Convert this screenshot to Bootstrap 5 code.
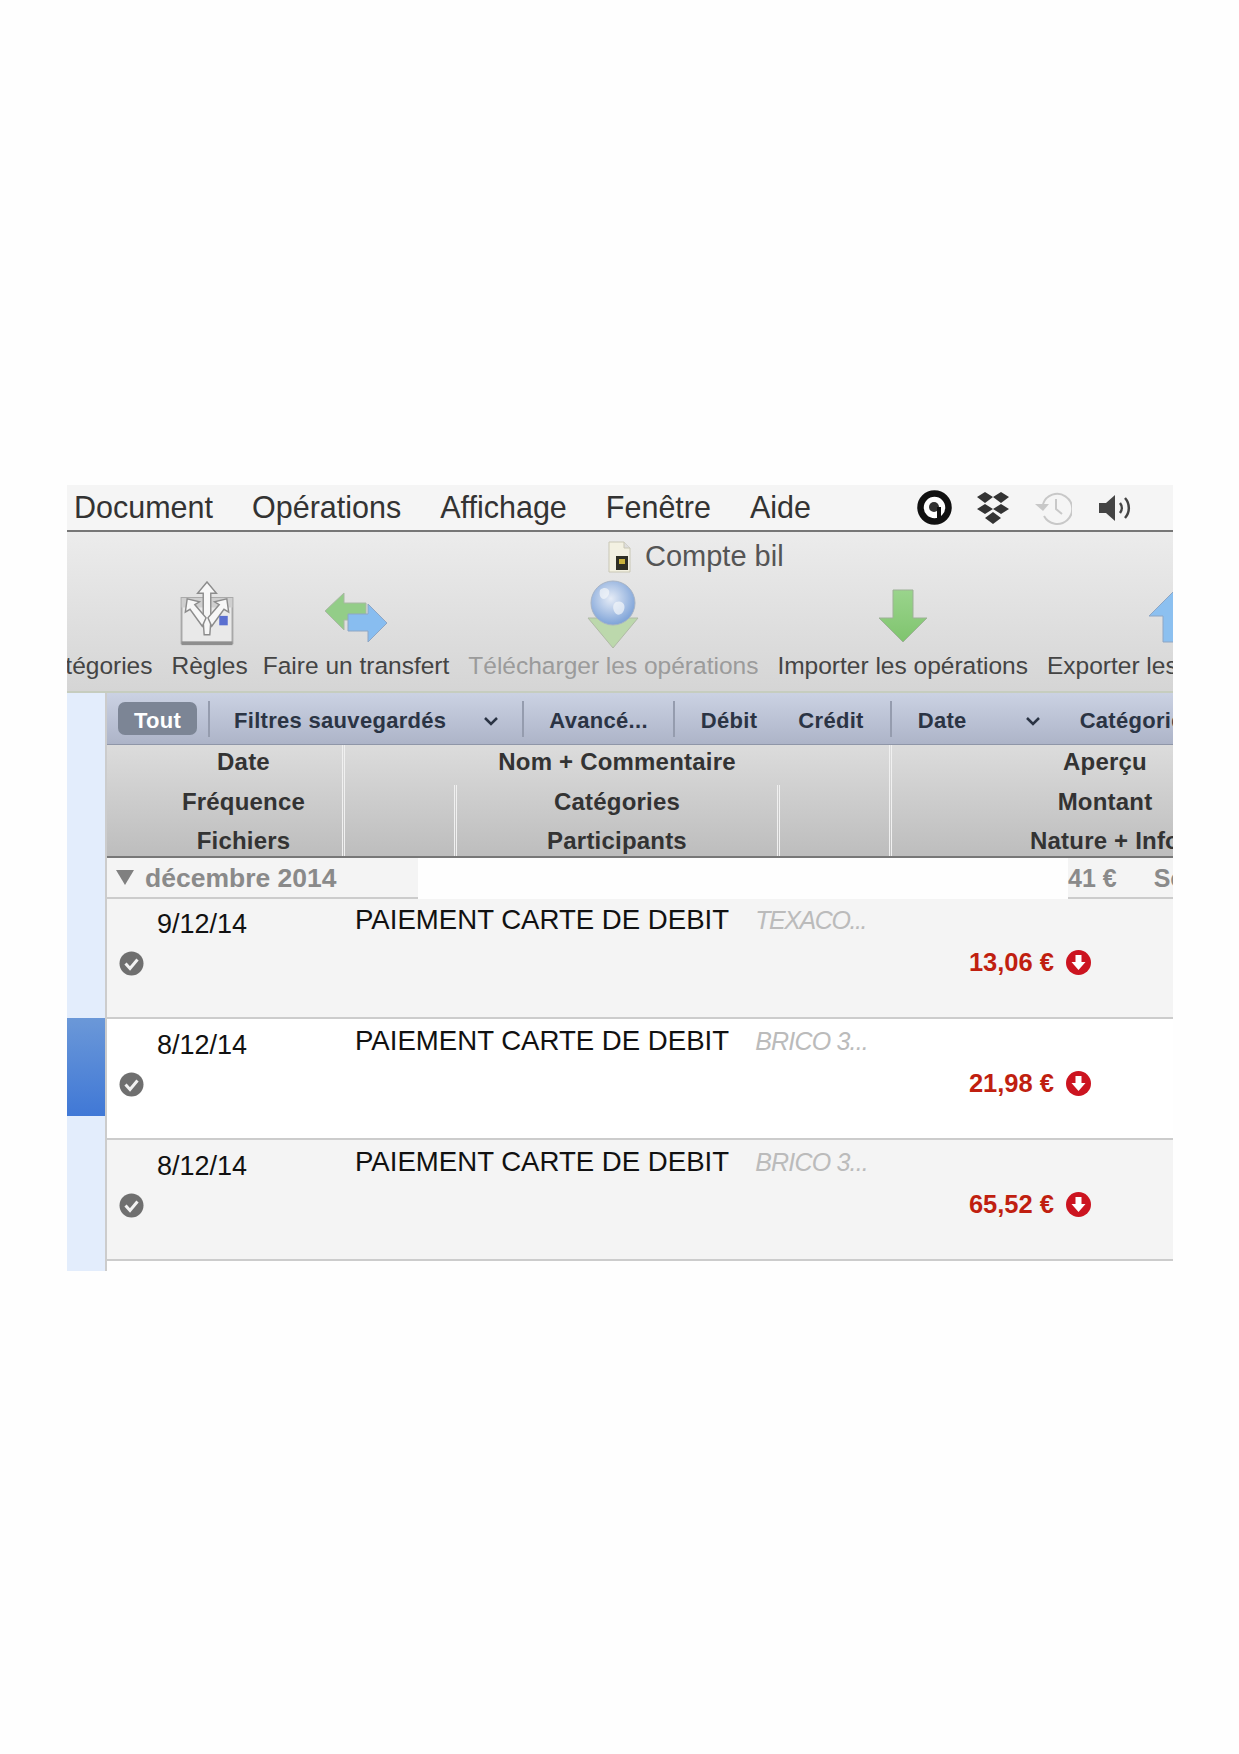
<!DOCTYPE html>
<html lang="fr">
  <head>
    <meta charset="UTF-8" />
    <meta name="viewport" content="width=device-width, initial-scale=1" />
    <title>Compte bil</title>
    <link
      href="https://cdn.jsdelivr.net/npm/bootstrap@5.3.0/dist/css/bootstrap.min.css"
      rel="stylesheet"
    />
    <style>
      body { background: #fefefe; font-family: "Liberation Sans", Arial, sans-serif; }
      .stage { padding: 485px 67px 0; }
      .app-frame { width: 1106px; height: 786px; overflow: hidden; }

      .menu-strip { height: 47px; background: #f5f5f5; border-bottom: 2px solid #777; font-size: 30.5px; color: #333; padding-left: 7px; }
      .menu-strip span { margin-right: 39px; line-height: 42px; padding-bottom: 2px; white-space: nowrap; }
      .menu-icons { margin-left: 67px; gap: 23px; }
      .menu-icons svg { display: block; }
      .icon-sound { margin-left: 3px; }

      .tool-zone { height: 161px; background: linear-gradient(#ececec, #d5d5d5); border-bottom: 2px solid #c6cdbf; }
      .title-line { height: 46px; padding: 4px 0 0 540px; font-size: 29px; color: #555; gap: 13px; }
      .tool-line { margin-left: -33px; gap: 19px; }
      .tool-item { flex: none; height: 113px; font-size: 24.5px; color: #444; white-space: nowrap; }
      .tool-item.off { color: #9b9b9b; }
      .tool-item.tight { margin-right: -4px; }
      .tool-art { height: 70px; }
      .tool-item svg { display: block; }
      .art-rules { margin: 3px 0 0 -6px; }

      .side-rail { width: 40px; flex: none; height: 579px; background: #e3edfc; border-right: 2px solid #ccc; }
      .side-pick { margin-top: 325px; height: 98px; background: linear-gradient(#6b98d8, #4078d6); }
      .list-zone { flex: 1; min-width: 0; }

      .filter-line { height: 52px; background: linear-gradient(#cbd2e3, #adb4c8); border-bottom: 1px solid #8f96a8; font-size: 22px; font-weight: 700; color: #2b3444; padding-left: 11px; white-space: nowrap; letter-spacing: .3px; }
      .filter-line > span { padding-top: 4px; }
      .tout-pill { flex: none; width: 79px; height: 33px; padding-top: 3px; background: #7c8595; color: #fff; border-radius: 7px; margin-right: 11px; }
      .filter-sep { width: 2px; height: 36px; background: #959cae; flex: none; }
      .filter-chev { flex: none; margin-top: 5px; }
      .f-saved { margin: 0 38px 0 24px; }
      .f-sep-a { margin-left: 24px; }
      .f-adv { margin: 0 25px 0 25px; }
      .f-debit { margin-left: 26px; }
      .f-credit { margin: 0 26px 0 41px; }
      .f-date { margin: 0 59px 0 26px; }
      .f-cat { margin-left: 40px; }

      .head-grid { height: 113px; overflow: hidden; background: linear-gradient(#dcdcdc, #bdbdbd); border-bottom: 2px solid #777; font-size: 24px; font-weight: 700; color: #333; text-align: center; white-space: nowrap; letter-spacing: .2px; }
      .head-col { flex: none; border-right: 3px double #f0f0f0; }
      .head-cell { height: 39.6px; line-height: 33px; }
      .head-sub { flex: none; border-right: 3px double #f0f0f0; }
      .col-date { width: 238px; padding-left: 38px; }
      .col-name { width: 547px; }
      .col-view { width: 426px; }
      .sub-a { width: 112px; }
      .sub-b { width: 323px; }
      .sub-c { flex: 1; }

      .month-line { height: 41px; font-size: 26.5px; font-weight: 700; color: #8a8a8a; white-space: nowrap; }
      .month-line span { padding-top: 3px; }
      .month-left { width: 311px; background: #f4f4f4; border-bottom: 2px solid #ccc; padding-left: 9px; gap: 11px; }
      .month-right { margin-left: 650px; flex: none; width: 200px; background: #f4f4f4; border-bottom: 2px solid #ccc; font-size: 25px; gap: 37px; }

      .op-line { height: 121px; padding-top: 1px; border-bottom: 2px solid #ccc; background: #f4f4f4; display: grid; grid-template-columns: 248px 1fr; grid-template-rows: 50px 1fr; }
      .op-line.op-first { height: 120px; padding-top: 0; }
      .op-line.plain { background: #fff; }
      .op-date { font-size: 27px; color: #111; padding: 5px 0 0 50px; }
      .op-name { font-size: 27.6px; color: #111; white-space: nowrap; }
      .op-shop { font-size: 25px; font-style: italic; color: #bbb; margin-left: 26px; letter-spacing: -.8px; }
      .op-shop.packed { letter-spacing: -1.4px; }
      .op-check { padding: 2px 0 0 12px; }
      .op-sum { font-size: 25.5px; font-weight: 700; color: #c01f10; padding-right: 82px; gap: 12px; height: 28px; margin-top: -1px; }
    </style>
  </head>
  <body>
    <div class="stage">
      <div class="app-frame">
        <div class="menu-strip d-flex align-items-center">
          <span>Document</span>
          <span>Opérations</span>
          <span>Affichage</span>
          <span>Fenêtre</span>
          <span>Aide</span>
          <div class="menu-icons d-flex align-items-center">
            <svg width="35" height="35" viewBox="0 0 35 35">
              <circle cx="17.500" cy="17.500" r="14" fill="#fff" stroke="#111" stroke-width="6.500" />
              <circle cx="17" cy="17" r="5" fill="#333" />
              <path d="M22 17v11" stroke="#111" stroke-width="4" />
            </svg>
            <svg width="36" height="34" viewBox="0 0 36 34" fill="#333">
              <path d="M10 1l8 5-8 6-8-6zM26 1l8 5-8 6-8-6zM10 13l8 5-8 5-8-5zM26 13l8 5-8 5-8-5zM18 21l8 6-8 6-8-6z" />
            </svg>
            <svg width="38" height="34" viewBox="0 0 38 34" fill="none" stroke="#c8c8c8" stroke-width="2">
              <path d="M9 13a15 15 0 1 1 1 12" />
              <path d="M22 8v10l6 5" />
              <path d="M1 13h14l-6 7z" fill="#c8c8c8" stroke="none" />
            </svg>
            <svg class="icon-sound" width="36" height="30" viewBox="0 0 36 30">
              <path d="M1 10h7l9-8v26l-9-8H1z" fill="#444" />
              <path d="M22 10a8 8 0 0 1 0 10M27 5a15 15 0 0 1 0 20" fill="none" stroke="#444" stroke-width="2.5" />
            </svg>
          </div>
        </div>

        <div class="tool-zone">
          <div class="title-line d-flex align-items-center">
            <svg width="25" height="32" viewBox="0 0 25 32">
              <path d="M2 1h15l6 6v24H2z" fill="#f3f1e2" stroke="#c9c7b5" />
              <path d="M17 1v6h6" fill="#ddd" stroke="#c9c7b5" />
              <rect x="9" y="15" width="12" height="14" fill="#2f2f24" />
              <rect x="12" y="18" width="6" height="5" fill="#c9b23c" />
            </svg>
            <span>Compte bil</span>
          </div>
          <div class="tool-line d-flex">
            <div class="tool-item d-flex flex-column align-items-center">
              <div class="tool-art"></div>
              <span>Catégories</span>
            </div>
            <div class="tool-item tight d-flex flex-column align-items-center">
              <div class="tool-art">
                <svg class="art-rules" width="58" height="66" viewBox="0 0 60 70">
                  <rect x="3" y="18" width="54" height="48" fill="#e9e9e9" stroke="#a8a8a8" stroke-width="2" />
                  <rect x="3" y="64" width="54" height="4" fill="#8e8e8e" />
                  <path d="M3 18h54v10H3z" fill="#cfcfcf" />
                  <path d="M30 1l10 12h-6v30l-1 14h-6l-1-14V13h-6z" fill="#f7f7f7" stroke="#8c8c8c" stroke-width="1.500" />
                  <path d="M25 48L12 30l-5 3 2-14 13 3-5 3 12 14zM35 48l13-18 5 3-2-14-13 3 5 3-12 14z" fill="#f7f7f7" stroke="#8c8c8c" stroke-width="1.500" />
                  <rect x="43" y="37" width="9" height="10" fill="#5a6fd0" />
                </svg>
              </div>
              <span>Règles</span>
            </div>
            <div class="tool-item d-flex flex-column align-items-center">
              <div class="tool-art">
                <svg width="64" height="66" viewBox="0 0 64 66">
                  <g transform="translate(0 14)">
                    <path d="M1 19L20 1v10h22v17H20v10z" fill="#93cd88" stroke="#a9b8a4" />
                    <path d="M63 31L44 50V39H24V22h20V12z" fill="#88bdf0" stroke="#8ea6c4" />
                  </g>
                </svg>
              </div>
              <span>Faire un transfert</span>
            </div>
            <div class="tool-item off d-flex flex-column align-items-center">
              <div class="tool-art">
                <svg width="54" height="72" viewBox="0 0 54 72">
                  <defs>
                    <radialGradient id="globeFill" cx=".45" cy=".4" r=".6">
                      <stop offset="0" stop-color="#e6ecf6" />
                      <stop offset="1" stop-color="#7ea3d8" />
                    </radialGradient>
                  </defs>
                  <path d="M2 40h50L27 70z" fill="#bcd8ac" stroke="#b0baa6" />
                  <circle cx="27" cy="25" r="22" fill="url(#globeFill)" stroke="#a7b4c6" />
                  <path d="M14 12c6-5 12 0 8 6s-10 2-8-6zM30 24c6-2 10 2 8 8s-8 6-10 1 0-8 2-9z" fill="#f4f6fa" opacity=".7" />
                </svg>
              </div>
              <span>Télécharger les opérations</span>
            </div>
            <div class="tool-item d-flex flex-column align-items-center">
              <div class="tool-art">
                <svg width="52" height="68" viewBox="0 0 52 68">
                  <defs>
                    <linearGradient id="greenFill" x1="0" y1="0" x2="0" y2="1">
                      <stop offset="0" stop-color="#9ad48c" />
                      <stop offset="1" stop-color="#7fc46e" />
                    </linearGradient>
                  </defs>
                  <path d="M16 12h20v28h14L26 64 2 40h14z" fill="url(#greenFill)" stroke="#9db196" />
                </svg>
              </div>
              <span>Importer les opérations</span>
            </div>
            <div class="tool-item d-flex flex-column align-items-center">
              <div class="tool-art">
                <svg width="52" height="68" viewBox="0 0 52 68">
                  <path d="M16 64h20V38h14L26 14 2 38h14z" fill="#8cc0f0" stroke="#8ea6c4" />
                </svg>
              </div>
              <span>Exporter les opérations</span>
            </div>
          </div>
        </div>

        <div class="d-flex">
          <div class="side-rail">
            <div class="side-pick"></div>
          </div>
          <div class="list-zone">
            <div class="filter-line d-flex align-items-center">
              <div class="tout-pill d-flex align-items-center justify-content-center">Tout</div>
              <div class="filter-sep"></div>
              <span class="f-saved">Filtres sauvegardés</span>
              <svg width="14" height="10" viewBox="0 0 14 10" class="filter-chev"><path d="M1 2l6 6 6-6" fill="none" stroke="#2b3444" stroke-width="2.500" /></svg>
              <div class="filter-sep f-sep-a"></div>
              <span class="f-adv">Avancé...</span>
              <div class="filter-sep"></div>
              <span class="f-debit">Débit</span>
              <span class="f-credit">Crédit</span>
              <div class="filter-sep"></div>
              <span class="f-date">Date</span>
              <svg width="14" height="10" viewBox="0 0 14 10" class="filter-chev"><path d="M1 2l6 6 6-6" fill="none" stroke="#2b3444" stroke-width="2.500" /></svg>
              <span class="f-cat">Catégories</span>
            </div>

            <div class="head-grid d-flex">
              <div class="head-col col-date">
                <div class="head-cell">Date</div>
                <div class="head-cell">Fréquence</div>
                <div class="head-cell">Fichiers</div>
              </div>
              <div class="head-col col-name">
                <div class="head-cell">Nom + Commentaire</div>
                <div class="d-flex">
                  <div class="head-sub sub-a"></div>
                  <div class="head-sub sub-b">
                    <div class="head-cell">Catégories</div>
                    <div class="head-cell">Participants</div>
                  </div>
                  <div class="sub-c"></div>
                </div>
              </div>
              <div class="col-view flex-shrink-0">
                <div class="head-cell">Aperçu</div>
                <div class="head-cell">Montant</div>
                <div class="head-cell">Nature + Info</div>
              </div>
            </div>

            <div class="month-line d-flex">
              <div class="month-left d-flex align-items-center flex-shrink-0">
                <svg width="18" height="15" viewBox="0 0 18 15"><path d="M0 0h18L9 15z" fill="#808080" /></svg>
                <span>décembre 2014</span>
              </div>
              <div class="month-right d-flex align-items-center">
                <span>41 €</span>
                <span>Solde</span>
              </div>
            </div>

            <div class="op-line op-first">
              <div class="op-date">9/12/14</div>
              <div class="op-name">PAIEMENT CARTE DE DEBIT<span class="op-shop packed">TEXACO...</span></div>
              <div class="op-check">
                <svg width="25" height="25" viewBox="0 0 25 25"><circle cx="12.500" cy="12.500" r="12" fill="#6f6f6f" /><path d="M6.500 12.500l4.500 5 7.500-9" fill="none" stroke="#f2f2f2" stroke-width="3" /></svg>
              </div>
              <div class="op-sum d-flex align-items-center justify-content-end">
                <span>13,06 €</span>
                <svg width="25" height="25" viewBox="0 0 25 25"><circle cx="12.500" cy="12.500" r="12.500" fill="#cc1420" /><path d="M9.500 5h6v7h4l-7 8-7-8h4z" fill="#fff" /></svg>
              </div>
            </div>
            <div class="op-line plain">
              <div class="op-date">8/12/14</div>
              <div class="op-name">PAIEMENT CARTE DE DEBIT<span class="op-shop">BRICO 3...</span></div>
              <div class="op-check">
                <svg width="25" height="25" viewBox="0 0 25 25"><circle cx="12.500" cy="12.500" r="12" fill="#6f6f6f" /><path d="M6.500 12.500l4.500 5 7.500-9" fill="none" stroke="#f2f2f2" stroke-width="3" /></svg>
              </div>
              <div class="op-sum d-flex align-items-center justify-content-end">
                <span>21,98 €</span>
                <svg width="25" height="25" viewBox="0 0 25 25"><circle cx="12.500" cy="12.500" r="12.500" fill="#cc1420" /><path d="M9.500 5h6v7h4l-7 8-7-8h4z" fill="#fff" /></svg>
              </div>
            </div>
            <div class="op-line">
              <div class="op-date">8/12/14</div>
              <div class="op-name">PAIEMENT CARTE DE DEBIT<span class="op-shop">BRICO 3...</span></div>
              <div class="op-check">
                <svg width="25" height="25" viewBox="0 0 25 25"><circle cx="12.500" cy="12.500" r="12" fill="#6f6f6f" /><path d="M6.500 12.500l4.500 5 7.500-9" fill="none" stroke="#f2f2f2" stroke-width="3" /></svg>
              </div>
              <div class="op-sum d-flex align-items-center justify-content-end">
                <span>65,52 €</span>
                <svg width="25" height="25" viewBox="0 0 25 25"><circle cx="12.500" cy="12.500" r="12.500" fill="#cc1420" /><path d="M9.500 5h6v7h4l-7 8-7-8h4z" fill="#fff" /></svg>
              </div>
            </div>
          </div>
        </div>
      </div>
    </div>

    <script src="https://cdn.jsdelivr.net/npm/bootstrap@5.3.0/dist/js/bootstrap.bundle.min.js"></script>
  </body>
</html>
